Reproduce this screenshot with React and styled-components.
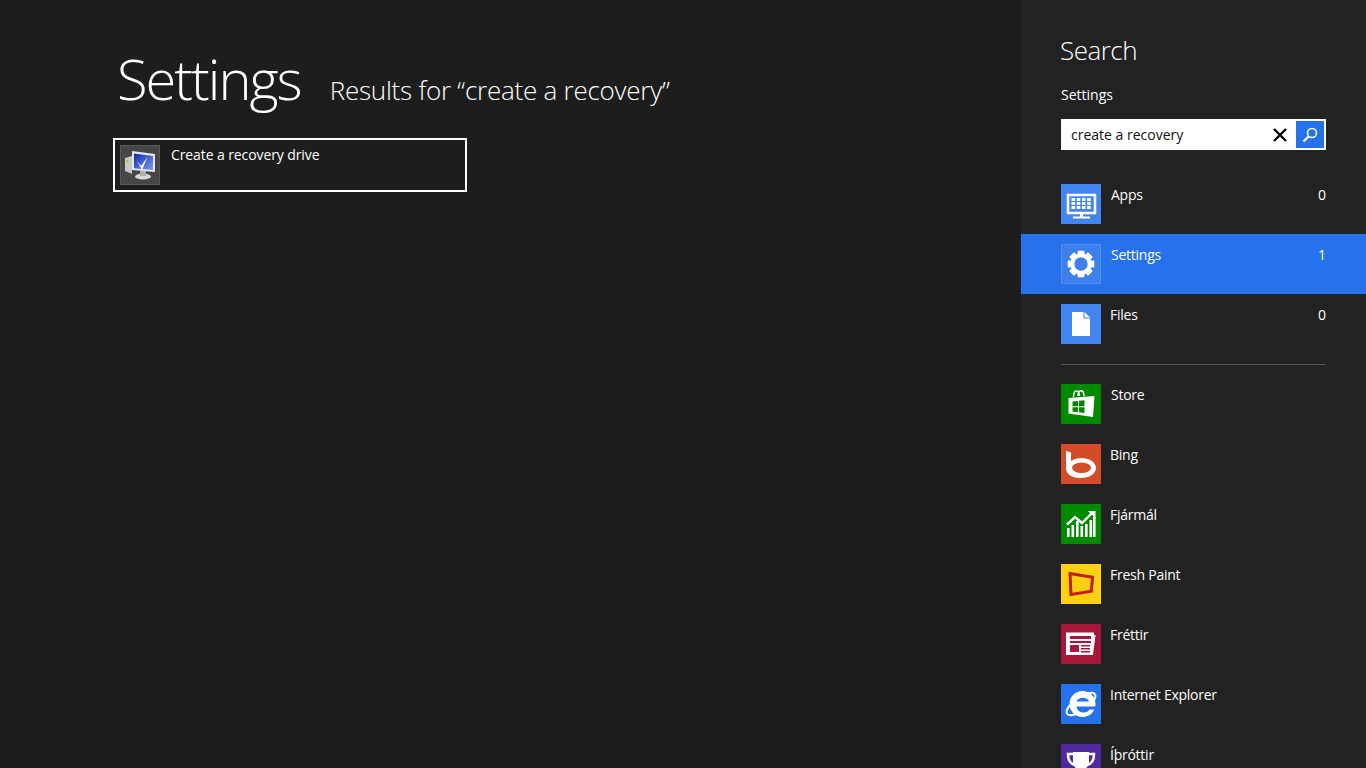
import React from 'react'
import styled, { createGlobalStyle } from 'styled-components'

const GlobalStyle = createGlobalStyle`
  html, body {
    margin: 0;
    height: 100%;
    overflow: hidden;
    background: #1d1d1d;
    font-family: "Open Sans", "Noto Sans", "Liberation Sans", sans-serif;
  }
`

const scopeItems = [
  { name: 'Apps', count: 0, icon: 'apps', color: '#4285ee', gap: 10 },
  { name: 'Settings', count: 1, icon: 'gear', color: '#4285ee', active: true, gap: 10 },
  { name: 'Files', count: 0, icon: 'file', color: '#4285ee', gap: 9 },
]

const appItems = [
  { name: 'Store', icon: 'store', color: '#008a00', gap: 10 },
  { name: 'Bing', icon: 'bing', color: '#d34b27', gap: 9 },
  { name: 'Fjármál', icon: 'finance', color: '#008a00', gap: 9 },
  { name: 'Fresh Paint', icon: 'paint', color: '#fdd011', gap: 9 },
  { name: 'Fréttir', icon: 'news', color: '#a9163c', gap: 9 },
  { name: 'Internet Explorer', icon: 'ie', color: '#2672ec', gap: 9 },
  { name: 'Íþróttir', icon: 'sport', color: '#4e2a9e', gap: 9 },
]

const bars = [
  { x: 6, y: 24 }, { x: 10.5, y: 21 }, { x: 15, y: 17 }, { x: 19.5, y: 22 },
  { x: 24, y: 20 }, { x: 28.5, y: 16 }, { x: 32, y: 13 },
]

function TileIcon({ name }) {
  if (name === 'apps') {
    return (
      <svg width="40" height="40" viewBox="0 0 40 40">
        <rect x="7" y="11" width="27" height="18" fill="none" stroke="#fff" strokeWidth="2.5" />
        {[0, 1, 2, 3].map(i => [0, 1, 2].map(j => (
          <rect key={i + '-' + j} x={10.5 + i * 5.2} y={14 + j * 4} width="3.6" height="3" fill="#fff" />
        )))}
        <rect x="19" y="30" width="3" height="3" fill="#fff" />
        <rect x="12" y="32.5" width="17" height="2" fill="#fff" />
      </svg>
    )
  }
  if (name === 'gear') {
    return (
      <svg width="40" height="40" viewBox="0 0 40 40">
        {[0, 45, 90, 135].map(a => (
          <rect key={a} x="16.5" y="6.7" width="7" height="26.6" rx="1" fill="#fff" transform={`rotate(${a} 20 20)`} />
        ))}
        <circle cx="20" cy="20" r="10.5" fill="#fff" />
        <circle cx="20" cy="20" r="6.7" fill="#3c80ee" />
      </svg>
    )
  }
  if (name === 'file') {
    return (
      <svg width="40" height="40" viewBox="0 0 40 40">
        <path d="M11 8h11.500v6.500H29V32H11z" fill="#fff" />
        <path d="M23.500 8l5.500 5.500h-5.500z" fill="#fff" />
      </svg>
    )
  }
  if (name === 'store') {
    return (
      <svg width="40" height="40" viewBox="0 0 40 40">
        <path d="M7.500 14l26-2-1.500 21-24.500-3.500z" fill="#fff" />
        <path d="M12.500 13c0-8 6-8 6-1M17 12c0-7 6-7 6 0" fill="none" stroke="#fff" strokeWidth="1.400" />
        <path d="M11.500 17.500l5.500-.6v5.300h-5.500zM18 16.800l5.500-.6v6h-5.500zM11.500 23.200H17v5l-5.500-.7zM18 23.200h5.500v5.800l-5.500-.7z" fill="#008a00" />
      </svg>
    )
  }
  if (name === 'bing') {
    return (
      <svg width="40" height="40" viewBox="0 0 40 40">
        <path d="M5 7l5 1.500V17c3-2 7-3 10-3 8 0 15 4 15 10s-7 10-15 10S5 31 5 24z" fill="#fff" />
        <ellipse cx="20.500" cy="23.700" rx="9.500" ry="5.200" fill="#d34b27" />
      </svg>
    )
  }
  if (name === 'finance') {
    return (
      <svg width="40" height="40" viewBox="0 0 40 40">
        {bars.map(b => (
          <rect key={b.x} x={b.x} y={b.y} width="2.600" height={33 - b.y} fill="#fff" />
        ))}
        <path d="M6 20.500l8-7.500 7 6 10-10" fill="none" stroke="#fff" strokeWidth="2.400" />
        <path d="M27 7h7.500v7.500z" fill="#fff" />
      </svg>
    )
  }
  if (name === 'paint') {
    return (
      <svg width="40" height="40" viewBox="0 0 40 40">
        <path d="M9 9.500l22.500 3.700-1.200 14L10 30.500z" fill="none" stroke="#c0201c" strokeWidth="3" />
      </svg>
    )
  }
  if (name === 'news') {
    return (
      <svg width="40" height="40" viewBox="0 0 40 40">
        <path d="M5 8.500h28v2.500h1.500l-2.500 20H5z" fill="#fff" />
        <rect x="9" y="12" width="21" height="3" fill="#a9163c" />
        <rect x="9" y="17" width="21" height="2" fill="#a9163c" />
        <rect x="9" y="21" width="9" height="7" fill="#a9163c" />
        <path d="M20 21h9v1.500h-9zM20 24h9v1.500h-9zM20 27h9v1.500h-9z" fill="#a9163c" />
      </svg>
    )
  }
  if (name === 'ie') {
    return (
      <svg width="40" height="40" viewBox="0 0 40 40">
        <ellipse cx="20" cy="20" rx="17" ry="6.500" transform="rotate(-35 20 20)" fill="none" stroke="#fff" strokeWidth="2" />
        <circle cx="21.500" cy="20" r="13" fill="#fff" />
        <path d="M15.500 17.500c1.500-5 11-5 12.500 0z" fill="#2672ec" />
        <path d="M36 22.500H15.500c.8 4 3.600 6 7 6 3 0 5-1 6-3h7.500z" fill="#2672ec" />
      </svg>
    )
  }
  return (
    <svg width="40" height="40" viewBox="0 0 40 40">
      <path d="M12 8h16v9c0 6-4 9-8 9s-8-3-8-9z" fill="#fff" />
      <path d="M12 10H7c0 6 3 10 7 11M28 10h5c0 6-3 10-7 11" fill="none" stroke="#fff" strokeWidth="2.500" />
      <path d="M18 25h4v5h4v3H14v-3h4z" fill="#fff" />
    </svg>
  )
}

export default function App() {
  return (
    <>
      <GlobalStyle />
      <Page>
        <Main>
          <Header>
            <Title>Settings</Title>
            <Subtitle>Results for “create a recovery”</Subtitle>
          </Header>
          <ResultCard>
            <ResultIcon>
              <svg width="38" height="38" viewBox="1 1 38 38">
                <defs>
                  <linearGradient id="screen" x1="0" y1="0" x2="1" y2="1">
                    <stop offset="0" stopColor="#0f2aa8" />
                    <stop offset="1" stopColor="#7d9cf0" />
                  </linearGradient>
                </defs>
                <path d="M5 13l7-2v18l-7-3z" fill="#c9c9c4" />
                <rect x="6.500" y="15" width="2" height="2" fill="#7fc850" />
                <path d="M12 6l23 3v18l-23-2z" fill="#e4e8ee" />
                <path d="M14 8.500l19 2.500v14l-19-1.800z" fill="url(#screen)" />
                <path d="M17 16l4 5 6.500-9-5.500 13z" fill="#fff" />
                <ellipse cx="23" cy="31.500" rx="8" ry="3" fill="#d8d8d4" />
                <rect x="20" y="26" width="6" height="5" fill="#b0b0ac" />
              </svg>
            </ResultIcon>
            <ResultText>Create a recovery drive</ResultText>
          </ResultCard>
        </Main>
        <Charm>
          <CharmTitle>Search</CharmTitle>
          <ScopeLabel>Settings</ScopeLabel>
          <SearchBox>
            <SearchText>create a recovery</SearchText>
            <ClearButton>
              <svg width="16" height="16" viewBox="0 0 16 16">
                <path d="M2 2l12 12M14 2L2 14" stroke="#000" strokeWidth="2.400" />
              </svg>
            </ClearButton>
            <SearchButton>
              <svg width="18" height="18" viewBox="0 0 18 18">
                <circle cx="11" cy="7" r="4.500" fill="none" stroke="#fff" strokeWidth="1.600" />
                <path d="M7.500 10.500L2.500 15.500" stroke="#fff" strokeWidth="2.200" />
              </svg>
            </SearchButton>
          </SearchBox>
          <RowList>
            {scopeItems.map(item => (
              <Row key={item.name} $active={item.active} $gap={item.gap}>
                <Tile $color={item.active ? '#3c80ee' : item.color} $outlined={item.active}>
                  <TileIcon name={item.icon} />
                </Tile>
                <RowName>{item.name}</RowName>
                <RowCount>{item.count}</RowCount>
              </Row>
            ))}
          </RowList>
          <Divider />
          <RowList>
            {appItems.map(item => (
              <Row key={item.name} $gap={item.gap}>
                <Tile $color={item.color}>
                  <TileIcon name={item.icon} />
                </Tile>
                <RowName>{item.name}</RowName>
              </Row>
            ))}
          </RowList>
        </Charm>
      </Page>
    </>
  )
}

const Page = styled.div`
  display: flex;
  height: 768px;
  overflow: hidden;
  color: #fff;
`

const Main = styled.div`
  flex: 1;
  padding: 40px 0 0 113px;
`

const Header = styled.div`
  display: flex;
  align-items: baseline;
  gap: 29px;
  margin-left: 4px;
  height: 98px;
`

const Title = styled.h1`
  margin: 0;
  font-size: 56px;
  line-height: 76px;
  font-weight: 300;
  letter-spacing: -2px;
`

const Subtitle = styled.div`
  font-size: 26px;
  font-weight: 300;
  letter-spacing: -0.24px;
`

const ResultCard = styled.div`
  box-sizing: border-box;
  width: 354px;
  height: 54px;
  border: 2px solid #fff;
  padding: 5px;
  display: flex;
  gap: 11px;
`

const ResultIcon = styled.div`
  box-sizing: border-box;
  width: 40px;
  height: 40px;
  background: #464646;
  border: 1px solid #585858;
  flex-shrink: 0;
`

const ResultText = styled.div`
  font-size: 14px;
  line-height: 20px;
  letter-spacing: -0.1px;
`

const Charm = styled.aside`
  width: 345px;
  flex-shrink: 0;
  background: #222222;
  height: 768px;
  overflow: hidden;
`

const CharmTitle = styled.div`
  margin: 31px 0 0 39px;
  font-size: 26px;
  line-height: 38px;
  font-weight: 300;
  letter-spacing: -0.5px;
`

const ScopeLabel = styled.div`
  margin: 15px 0 0 40px;
  font-size: 14px;
  line-height: 21px;
`

const SearchBox = styled.div`
  margin: 14px 40px 24px 40px;
  height: 31px;
  background: #fff;
  display: flex;
  align-items: center;
  padding: 0 2px 0 10px;
`

const SearchText = styled.div`
  flex: 1;
  color: #111;
  font-size: 14px;
`

const ClearButton = styled.div`
  width: 32px;
  display: flex;
  justify-content: center;
`

const SearchButton = styled.div`
  width: 28px;
  height: 27px;
  background: #2672ec;
  display: flex;
  align-items: center;
  justify-content: center;
`

const RowList = styled.div`
  display: flex;
  flex-direction: column;
`

const Row = styled.div`
  height: 60px;
  padding: 10px 40px;
  box-sizing: border-box;
  display: flex;
  gap: ${props => props.$gap}px;
  flex-shrink: 0;
  background: ${props => (props.$active ? '#2672ec' : 'transparent')};
`

const Tile = styled.div`
  box-sizing: border-box;
  width: 40px;
  height: 40px;
  flex-shrink: 0;
  background: ${props => props.$color};
  outline: ${props => (props.$outlined ? '1px solid rgba(255,255,255,0.12)' : 'none')};
  outline-offset: -1px;
`

const RowName = styled.div`
  flex: 1;
  font-size: 14px;
  line-height: 20px;
  margin-top: 1px;
  letter-spacing: -0.25px;
`

const RowCount = styled.div`
  font-size: 14px;
  line-height: 20px;
  margin-top: 1px;
`

const Divider = styled.div`
  height: 1px;
  margin: 10px 40px 9px;
  background: #555;
`
